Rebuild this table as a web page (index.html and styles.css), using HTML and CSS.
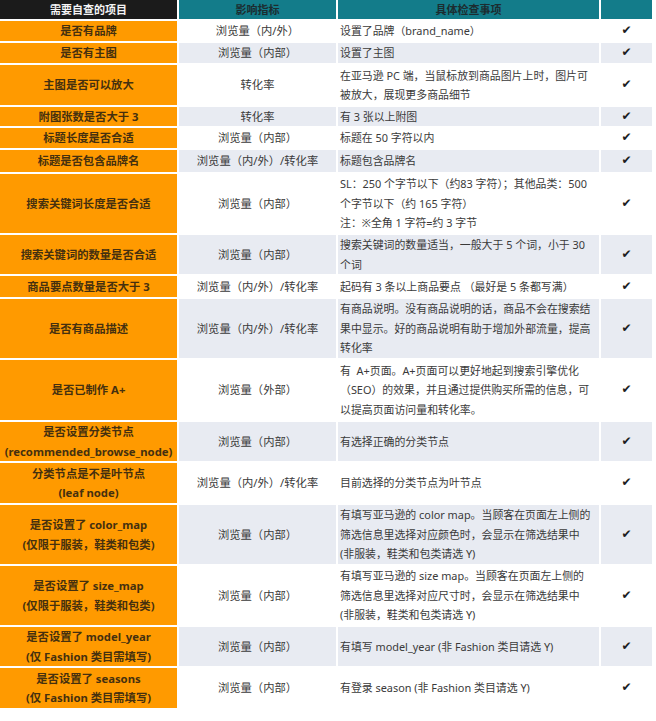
FILE: index.html
```html
<!DOCTYPE html>
<html lang="zh">
<head>
<meta charset="utf-8">
<link rel="stylesheet" href="styles.css">
</head>
<body>
<div class="sheet">
  <div class="row head">
    <div class="c1 hdark">需要自查的项目</div>
    <div class="c2">影响指标</div>
    <div class="c3 center">具体检查事项</div>
    <div class="c4"></div>
  </div>
  <div class="row">
    <div class="c1">是否有品牌</div>
    <div class="c2">浏览量（内/外）</div>
    <div class="c3">设置了品牌（brand_name）</div>
    <div class="c4">✔</div>
  </div>
  <div class="row alt">
    <div class="c1">是否有主图</div>
    <div class="c2">浏览量（内部）</div>
    <div class="c3">设置了主图</div>
    <div class="c4">✔</div>
  </div>
  <div class="row">
    <div class="c1">主图是否可以放大</div>
    <div class="c2">转化率</div>
    <div class="c3">在亚马逊 PC 端，当鼠标放到商品图片上时，图片可<br>被放大，展现更多商品细节</div>
    <div class="c4">✔</div>
  </div>
  <div class="row alt">
    <div class="c1">附图张数是否大于 3</div>
    <div class="c2">转化率</div>
    <div class="c3">有 3 张以上附图</div>
    <div class="c4">✔</div>
  </div>
  <div class="row">
    <div class="c1">标题长度是否合适</div>
    <div class="c2">浏览量（内部）</div>
    <div class="c3">标题在 50 字符以内</div>
    <div class="c4">✔</div>
  </div>
  <div class="row alt">
    <div class="c1">标题是否包含品牌名</div>
    <div class="c2">浏览量（内/外）/转化率</div>
    <div class="c3">标题包含品牌名</div>
    <div class="c4">✔</div>
  </div>
  <div class="row">
    <div class="c1">搜索关键词长度是否合适</div>
    <div class="c2">浏览量（内部）</div>
    <div class="c3">SL：250 个字节以下（约83 字符）；其他品类：500<br>个字节以下（约 165 字符）<br>注：※全角 1 字符=约 3 字节</div>
    <div class="c4">✔</div>
  </div>
  <div class="row alt">
    <div class="c1">搜索关键词的数量是否合适</div>
    <div class="c2">浏览量（内部）</div>
    <div class="c3">搜索关键词的数量适当，一般大于 5 个词，小于 30<br>个词</div>
    <div class="c4">✔</div>
  </div>
  <div class="row">
    <div class="c1">商品要点数量是否大于 3</div>
    <div class="c2">浏览量（内/外）/转化率</div>
    <div class="c3">起码有 3 条以上商品要点 （最好是 5 条都写满）</div>
    <div class="c4">✔</div>
  </div>
  <div class="row alt">
    <div class="c1">是否有商品描述</div>
    <div class="c2">浏览量（内/外）/转化率</div>
    <div class="c3">有商品说明。没有商品说明的话，商品不会在搜索结<br>果中显示。好的商品说明有助于增加外部流量，提高<br>转化率</div>
    <div class="c4">✔</div>
  </div>
  <div class="row">
    <div class="c1">是否已制作 A+</div>
    <div class="c2">浏览量（外部）</div>
    <div class="c3">有&nbsp; A+页面。A+页面可以更好地起到搜索引擎优化<br>（SEO）的效果，并且通过提供购买所需的信息，可<br>以提高页面访问量和转化率。</div>
    <div class="c4">✔</div>
  </div>
  <div class="row alt">
    <div class="c1">是否设置分类节点<br>(recommended_browse_node)</div>
    <div class="c2">浏览量（内部）</div>
    <div class="c3">有选择正确的分类节点</div>
    <div class="c4">✔</div>
  </div>
  <div class="row">
    <div class="c1">分类节点是不是叶节点<br>(leaf node)</div>
    <div class="c2">浏览量（内/外）/转化率</div>
    <div class="c3">目前选择的分类节点为叶节点</div>
    <div class="c4">✔</div>
  </div>
  <div class="row alt">
    <div class="c1">是否设置了 color_map<br>(仅限于服装，鞋类和包类)</div>
    <div class="c2">浏览量（内部）</div>
    <div class="c3">有填写亚马逊的 color map。当顾客在页面左上侧的<br>筛选信息里选择对应颜色时，会显示在筛选结果中<br>(非服装，鞋类和包类请选 Y)</div>
    <div class="c4">✔</div>
  </div>
  <div class="row">
    <div class="c1">是否设置了 size_map<br>(仅限于服装，鞋类和包类)</div>
    <div class="c2">浏览量（内部）</div>
    <div class="c3">有填写亚马逊的 size map。当顾客在页面左上侧的<br>筛选信息里选择对应尺寸时，会显示在筛选结果中<br>(非服装，鞋类和包类请选 Y)</div>
    <div class="c4">✔</div>
  </div>
  <div class="row alt">
    <div class="c1">是否设置了 model_year<br>(仅 Fashion 类目需填写)</div>
    <div class="c2">浏览量（内部）</div>
    <div class="c3">有填写 model_year (非 Fashion 类目请选 Y)</div>
    <div class="c4">✔</div>
  </div>
  <div class="row">
    <div class="c1">是否设置了 seasons<br>(仅 Fashion 类目需填写)</div>
    <div class="c2">浏览量（内部）</div>
    <div class="c3">有登录 season (非 Fashion 类目请选 Y)</div>
    <div class="c4">✔</div>
  </div>
</div>
</body>
</html>
```

FILE: styles.css
```css
html, body {
  margin: 0;
  padding: 0;
  background: #ffffff;
}

body {
  font-family: "Noto Sans", "Noto Sans CJK SC", sans-serif;
  font-size: 11.3px;
  color: #3a3a3a;
}

.sheet {
  width: 652px;
  display: grid;
  grid-template-columns: 177px 157px 261px 51px;
  grid-template-rows: 19px 20px 20px 40px 19px 20px 22px 59px 39px 21px 59px 60px 39px 40px 59px 59px 39px 40px;
  column-gap: 2px;
  row-gap: 2px;
}

.row {
  display: contents;
}

.row > div {
  display: flex;
  flex-direction: column;
  justify-content: center;
  line-height: 19.5px;
  white-space: nowrap;
  overflow: hidden;
}

.c1 {
  background: #ff9a00;
  color: #45300f;
  font-weight: 700;
  text-align: center;
  align-items: center;
}

.c2 {
  text-align: center;
  align-items: center;
}

.c3 {
  text-align: left;
  padding-left: 2px;
  font-size: 10.9px;
}

.c3.center {
  text-align: center;
  padding-left: 0;
}

.c4 {
  align-items: center;
  font-family: "DejaVu Sans", sans-serif;
  font-size: 12px;
  color: #1e1e1e;
}

.alt > .c2,
.alt > .c3,
.alt > .c4 {
  background: #e8ebf2;
}

.head > div {
  background: #137c8a;
  color: #1c2c30;
  font-weight: 700;
  font-size: 11px;
  line-height: 19px;
}

.head > .hdark {
  background: #1b1b1b;
  color: #f4f4f4;
}
```
